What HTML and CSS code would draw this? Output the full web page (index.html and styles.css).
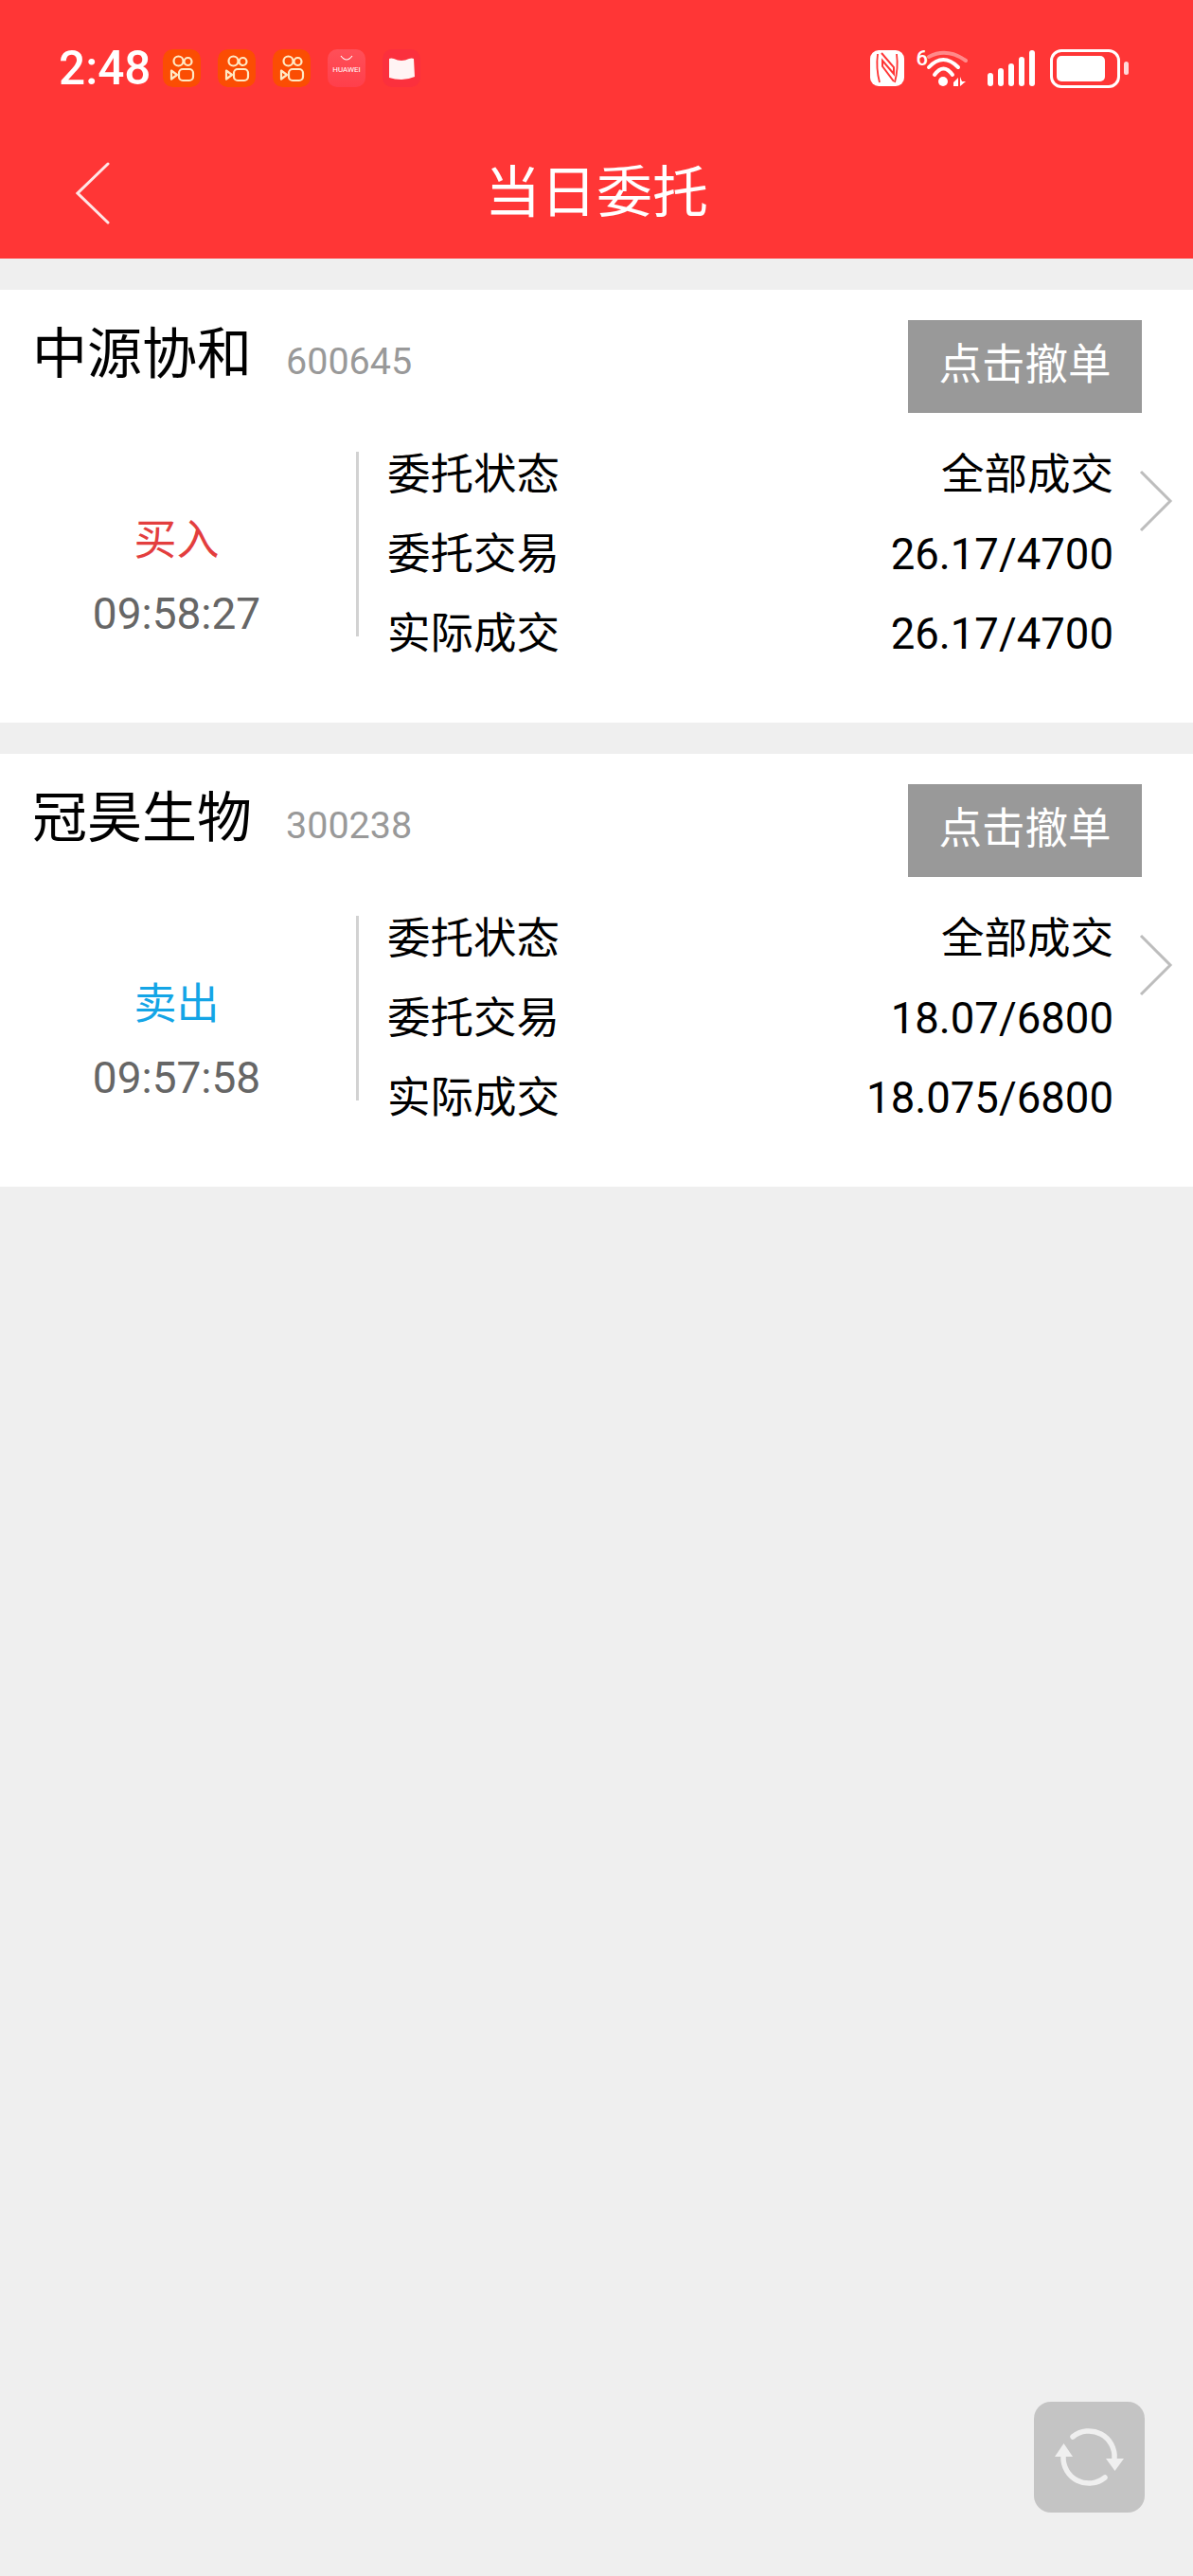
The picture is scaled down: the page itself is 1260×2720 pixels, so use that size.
FILE: index.html
```html
<!DOCTYPE html>
<html lang="zh-CN">

<head>
    <meta charset="UTF-8">
    <meta name="viewport" content="width=device-width, initial-scale=1.0">
    <title>当日委托</title>
    <link rel="stylesheet" href="styles.css">
</head>

<body>
    <svg class="defs" width="0" height="0">
        <symbol id="kwai" viewBox="0 0 40 40">
            <rect width="40" height="40" rx="10" fill="#fb4d03" />
            <g fill="none" stroke="#ffe9c4" stroke-width="2.2" stroke-linejoin="round">
                <circle cx="16.500" cy="12.500" r="5" />
                <circle cx="26.500" cy="13" r="4" />
                <rect x="17" y="21" width="15" height="12" rx="4" />
                <path d="M9 22.500 L15 27 L9 31.500 Z" />
            </g>
        </symbol>
    </svg>

    <header class="top">
        <div class="status">
            <span class="clock">2:48</span>
            <div class="notify">
                <svg class="app"><use href="#kwai" /></svg>
                <svg class="app"><use href="#kwai" /></svg>
                <svg class="app"><use href="#kwai" /></svg>
                <div class="app huawei">
                    <svg width="14" height="7" viewBox="0 0 14 7"><path d="M1 1 Q7 9 13 1" fill="none" stroke="#fff" stroke-width="1.1" /></svg>
                    <span>HUAWEI</span>
                </div>
                <div class="app book">
                    <svg width="32" height="32" viewBox="0 0 32 32"><path d="M3 6 Q5 5 8 6 Q12 8 16 8 Q20 8 24 6 Q27 5 29 6 L30 25 Q23 28 16 28 Q9 28 3 26 Z" fill="#fff4f4" /></svg>
                </div>
            </div>
            <div class="sys">
                <svg class="nfc" width="36" height="38" viewBox="0 0 36 38">
                    <rect width="36" height="38" rx="9" fill="#fff" />
                    <path d="M8 4 Q6 19 10 34 M28 4 Q30 19 26 34" fill="none" stroke="#ff3636" stroke-width="1.800" />
                    <path d="M12 3 L25 18 V25 L13 11 V17 L25 33" fill="none" stroke="#ff3636" stroke-width="2" />
                </svg>
                <div class="wifi">
                    <span class="wifi-num">6</span>
                    <svg width="48" height="42" viewBox="0 0 48 42">
                        <g fill="none" stroke-linecap="round" stroke-width="4">
                            <path d="M5 9 Q24 -1 44 13" stroke="#ff8a8a" />
                            <path d="M5 20 Q20 4 36 20" stroke="#fff" />
                            <path d="M11 28 Q20.500 15 30 28" stroke="#fff" />
                        </g>
                        <circle cx="20" cy="35" r="5" fill="#fff" />
                        <path d="M31 36 L36 31 V40 H31 Z M38 30 V40 L44 35 H40 Z" fill="#fff" />
                    </svg>
                </div>
                <div class="signal">
                    <i class="bar b1"></i><i class="bar b2"></i><i class="bar b3"></i><i class="bar b4"></i><i class="bar b5"></i>
                </div>
                <div class="battery">
                    <div class="cell"><div class="charge"></div></div>
                    <div class="nub"></div>
                </div>
            </div>
        </div>
        <nav class="nav">
            <div class="nav-side">
                <svg width="36" height="66" viewBox="0 0 36 66"><path d="M34 2 L2 33 L34 64" fill="none" stroke="#ffe6e6" stroke-width="3" stroke-linecap="round" stroke-linejoin="miter" /></svg>
            </div>
            <h1 class="title">当日委托</h1>
            <div class="nav-side"></div>
        </nav>
    </header>

    <main>
        <section class="card">
            <div class="card-head">
                <span class="name">中源协和</span>
                <span class="code">600645</span>
                <button class="cancel">点击撤单</button>
            </div>
            <div class="card-body">
                <div class="side">
                    <span class="buy">买入</span>
                    <span class="time">09:58:27</span>
                </div>
                <div class="rows">
                    <div class="row"><span>委托状态</span><span>全部成交</span></div>
                    <div class="row"><span>委托交易</span><span class="num">26.17/4700</span></div>
                    <div class="row"><span>实际成交</span><span class="num">26.17/4700</span></div>
                </div>
                <svg class="more" width="36" height="66" viewBox="0 0 36 66"><path d="M2 2 L33 33 L2 64" fill="none" stroke="#bdbdbd" stroke-width="3" /></svg>
            </div>
        </section>

        <section class="card">
            <div class="card-head">
                <span class="name">冠昊生物</span>
                <span class="code">300238</span>
                <button class="cancel">点击撤单</button>
            </div>
            <div class="card-body">
                <div class="side">
                    <span class="sell">卖出</span>
                    <span class="time">09:57:58</span>
                </div>
                <div class="rows">
                    <div class="row"><span>委托状态</span><span>全部成交</span></div>
                    <div class="row"><span>委托交易</span><span class="num">18.07/6800</span></div>
                    <div class="row"><span>实际成交</span><span class="num">18.075/6800</span></div>
                </div>
                <svg class="more" width="36" height="66" viewBox="0 0 36 66"><path d="M2 2 L33 33 L2 64" fill="none" stroke="#bdbdbd" stroke-width="3" /></svg>
            </div>
        </section>
    </main>

    <button class="refresh">
        <svg width="117" height="117" viewBox="0 0 117 117">
            <g fill="none" stroke="#efefef" stroke-width="5.500" stroke-linecap="round">
                <path d="M41 37 A27 27 0 0 1 85 60" />
                <path d="M75 80 A27 27 0 0 1 31 58" />
            </g>
            <path d="M76 60 H95 L85.500 73 Z M22 58 H41 L31.500 44 Z" fill="#efefef" />
        </svg>
    </button>
</body>

</html>
```

FILE: styles.css
```css
* {
    box-sizing: border-box;
}

body {
    margin: 0;
    min-height: 2720px;
    background: #efefef;
    font-family: Roboto, "Noto Sans CJK SC", sans-serif;
    color: #000;
    position: relative;
}

.defs {
    display: block;
    height: 0;
}

.top {
    background: #ff3636;
    color: #fff;
    height: 273px;
}

.status {
    height: 144px;
    display: flex;
    align-items: center;
    padding-left: 62px;
}

.clock {
    font-size: 49.500px;
    font-weight: 500;
    width: 110px;
}

.notify {
    display: flex;
    gap: 18px;
}

.app {
    width: 40px;
    height: 40px;
    border-radius: 10px;
    display: block;
}

.huawei {
    background: linear-gradient(#ff4f58, #ff3f4b);
    display: flex;
    flex-direction: column;
    align-items: center;
    font-size: 8px;
    line-height: 10px;
    padding-top: 6px;
}

.huawei svg {
    margin-bottom: 4px;
}

.book {
    background: #fb303d;
    display: flex;
    align-items: center;
    justify-content: center;
}

.sys {
    margin-left: auto;
    padding-right: 68px;
    display: flex;
    align-items: center;
}

.wifi {
    display: flex;
    align-items: flex-start;
    margin-left: 12px;
    height: 42px;
}

.wifi-num {
    font-size: 22px;
    line-height: 22px;
    font-weight: 500;
    margin-right: -4px;
}

.signal {
    display: flex;
    align-items: flex-end;
    gap: 5px;
    height: 38px;
    margin-left: 19px;
}

.bar {
    width: 6px;
    background: #fff;
    border-radius: 3px;
}

.b1 { height: 14px; }
.b2 { height: 19px; }
.b3 { height: 24px; }
.b4 { height: 31px; }
.b5 { height: 38px; }

.battery {
    display: flex;
    align-items: center;
    margin-left: 16px;
}

.cell {
    width: 74px;
    height: 41px;
    border: 3px solid #fff;
    border-radius: 12px;
    padding: 4px;
}

.charge {
    width: 51px;
    height: 100%;
    background: #fff;
    border-radius: 5px;
}

.nub {
    width: 5px;
    height: 14px;
    margin-left: 4px;
    background: #ffd9d9;
    border-radius: 3px;
}

.nav {
    height: 129px;
    padding-bottom: 10px;
    display: grid;
    grid-template-columns: 1fr auto 1fr;
    align-items: center;
}

.nav-side {
    padding-left: 80px;
    display: flex;
}

.title {
    margin: 0;
    font-size: 59px;
    font-weight: 400;
    line-height: 70px;
}

.card {
    background: #fff;
    height: 457px;
    margin-top: 33px;
    padding: 32px 0 0 34px;
}

.card-head {
    display: flex;
    align-items: flex-start;
}

.name {
    font-size: 58px;
    line-height: 72px;
    width: 268px;
}

.code {
    font-size: 39.500px;
    line-height: 88px;
    color: #999;
}

.cancel {
    margin-left: auto;
    margin-right: 54px;
    width: 247px;
    height: 98px;
    padding: 0 0 12px;
    border: none;
    background: #999;
    color: #fff;
    font: 45.500px "Noto Sans CJK SC", sans-serif;
}

.card-body {
    display: flex;
    align-items: flex-start;
    margin-top: 22px;
}

.side {
    height: 195px;
    margin-top: 19px;
    margin-left: -34px;
    margin-right: 34px;
    width: 379px;
    border-right: 3px solid #d2d2d2;
    display: flex;
    flex-direction: column;
    align-items: center;
    padding-right: 3px;
    padding-top: 68px;
}

.buy,
.sell {
    font-size: 45px;
    line-height: 52px;
}

.buy {
    color: #e33e3e;
}

.sell {
    color: #14a5e6;
}

.time {
    font-size: 46px;
    line-height: 62px;
    margin-top: 20px;
    color: #666;
}

.rows {
    flex: 1;
    margin-left: -4px;
    padding-top: 2px;
}

.row {
    display: flex;
    justify-content: space-between;
    height: 84px;
    line-height: 84px;
    font-size: 45.500px;
}

.more {
    margin: 38px 21px 0 27px;
    flex: none;
}

.refresh {
    position: absolute;
    left: 1092px;
    top: 2536px;
    width: 117px;
    height: 117px;
    padding: 0;
    border: none;
    border-radius: 18px;
    background: #c4c4c4;
}

.refresh svg {
    display: block;
}
```
